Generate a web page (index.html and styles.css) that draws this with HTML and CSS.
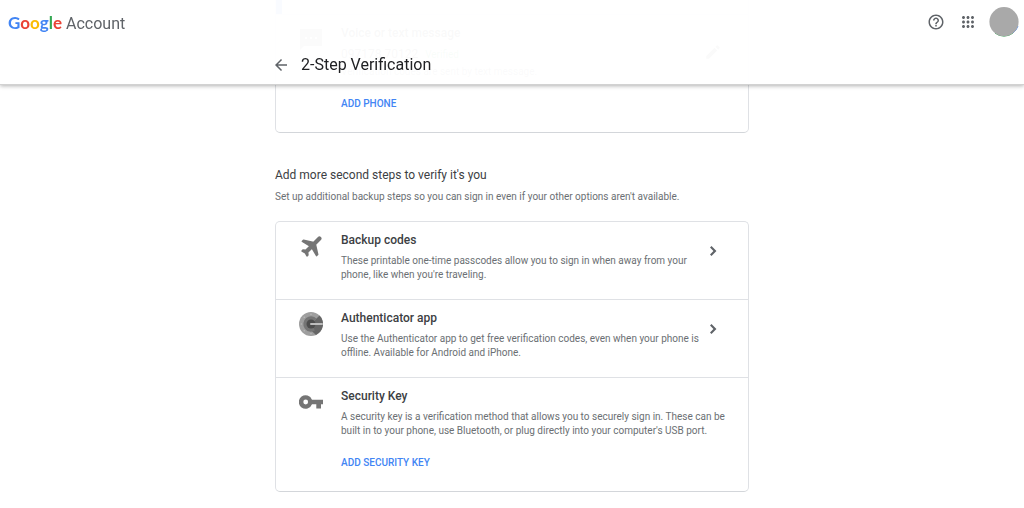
FILE: index.html
```html
<!DOCTYPE html>
<html lang="en">
<head>
  <meta charset="UTF-8">
  <title>2-Step Verification</title>
  <meta name="viewport" content="width=device-width, initial-scale=1.0">
  <link rel="stylesheet" href="styles.css">
</head>
<body>

<header class="header">
  <div class="topbar">
    <a class="brand" href="#"><span class="logo"><span class="blue">G</span><span class="red">o</span><span class="yellow">o</span><span class="blue">g</span><span class="green">l</span><span class="red">e</span></span> Account</a>
    <div class="tools">
      <button class="icon-btn" aria-label="Help">
        <svg width="18" height="18" viewBox="0 0 24 24"><path d="M11 18h2v-2h-2v2zm1-16C6.48 2 2 6.48 2 12s4.48 10 10 10 10-4.48 10-10S17.52 2 12 2zm0 18c-4.41 0-8-3.59-8-8s3.59-8 8-8 8 3.59 8 8-3.59 8-8 8zm0-14c-2.21 0-4 1.79-4 4h2c0-1.1.9-2 2-2s2 .9 2 2c0 2-3 1.75-3 5h2c0-2.25 3-2.5 3-5 0-2.21-1.79-4-4-4z"/></svg>
      </button>
      <button class="icon-btn" aria-label="Google apps">
        <svg width="18" height="18" viewBox="0 0 24 24"><path d="M6 8c1.1 0 2-.9 2-2s-.9-2-2-2-2 .9-2 2 .9 2 2 2zm6 12c1.1 0 2-.9 2-2s-.9-2-2-2-2 .9-2 2 .9 2 2 2zm-6 0c1.1 0 2-.9 2-2s-.9-2-2-2-2 .9-2 2 .9 2 2 2zm0-6c1.1 0 2-.9 2-2s-.9-2-2-2-2 .9-2 2 .9 2 2 2zm6 0c1.1 0 2-.9 2-2s-.9-2-2-2-2 .9-2 2 .9 2 2 2zm4-8c0 1.1.9 2 2 2s2-.9 2-2-.9-2-2-2-2 .9-2 2zm-4 2c1.1 0 2-.9 2-2s-.9-2-2-2-2 .9-2 2 .9 2 2 2zm6 6c1.1 0 2-.9 2-2s-.9-2-2-2-2 .9-2 2 .9 2 2 2zm0 6c1.1 0 2-.9 2-2s-.9-2-2-2-2 .9-2 2 .9 2 2 2z"/></svg>
      </button>
      <button class="avatar" aria-label="Profile">
        <svg width="30" height="30" viewBox="0 0 30 30">
          <path d="M6 26A14.500 14.500 0 0 0 24 26" fill="none" stroke="#34a853" stroke-width="1"/>
          <path d="M24 26A14.500 14.500 0 0 0 29 19" fill="none" stroke="#4285f4" stroke-width="1"/>
          <circle cx="15" cy="14.700" r="14.600" fill="#a9a9a9"/>
        </svg>
      </button>
    </div>
  </div>
  <div class="titlebar">
    <a class="back" href="#" aria-label="Back">
      <svg width="18" height="18" viewBox="0 0 24 24"><path d="M20 11H7.830l5.590-5.590L12 4l-8 8 8 8 1.410-1.410L7.830 13H20v-2z"/></svg>
    </a>
    <h1>2-Step Verification</h1>
  </div>
</header>

<main>
  <section class="card phone-card">
    <div class="selected"></div>
    <div class="row">
      <svg class="row-icon" width="24" height="24" viewBox="0 0 24 24"><path d="M1 2h22v17H5l-4 4V2zm5 8v2h2v-2H6zm5 0v2h2v-2h-2zm5 0v2h2v-2h-2z"/></svg>
      <div class="row-text">
        <h3>Voice or text message</h3>
        <p class="number">097178 70122 <span class="verified">Verified</span></p>
        <p>Verification codes are sent by text message.</p>
        <button class="action">ADD PHONE</button>
      </div>
      <button class="row-btn edit" aria-label="Edit phone">
        <svg width="18" height="18" viewBox="0 0 24 24"><path d="M3 17.250V21h3.750L17.810 9.940l-3.750-3.750L3 17.250zM20.710 7.040a1 1 0 0 0 0-1.410l-2.340-2.340a1 1 0 0 0-1.410 0l-1.830 1.830 3.750 3.750 1.830-1.830z"/></svg>
      </button>
    </div>
  </section>

  <h2>Add more second steps to verify it's you</h2>
  <p class="intro">Set up additional backup steps so you can sign in even if your other options aren't available.</p>

  <section class="card">
    <div class="row">
      <svg class="row-icon" width="24" height="24" viewBox="0 0 24 24"><path transform="translate(1 0) rotate(45 12 12)" stroke="#757575" stroke-width="1.600" stroke-linejoin="round" d="M22 15.500v-1.500L13.300 8.500V1.500a1.300 1.300 0 0 0-2.600 0v7L2 14v1.500l8.700-2.200v6.200L8.500 21.300V22.500l3.500-1 3.500 1v-1.200l-2.200-1.800v-6.200l8.700 2.200z"/></svg>
      <div class="row-text">
        <h3>Backup codes</h3>
        <p>These printable one-time passcodes allow you to sign in when away from your phone, like when you're traveling.</p>
      </div>
      <button class="row-btn" aria-label="Backup codes">
        <svg width="18" height="18" viewBox="0 0 24 24"><path d="M8 16.600 12.600 12 8 7.400 10 5.400l6.600 6.600-6.600 6.600-2-2z"/></svg>
      </button>
    </div>
    <div class="row">
      <svg class="row-icon" width="24" height="24" viewBox="0 0 24 24">
        <circle cx="12" cy="12" r="12" fill="#9e9e9e"/>
        <path d="M17.500 6.500 20.500 3.500A12 12 0 0 1 17 22.900L9 15.500z" fill="#666"/>
        <path d="M17.600 6.700A7.700 7.700 0 1 0 16 18.600L12 12z" fill="#757575"/>
        <circle cx="12" cy="12" r="4.500" fill="#4d4d4d"/>
        <path d="M12 12H23" stroke="#bdbdbd" stroke-width="2" stroke-linecap="round"/>
        <g fill="#bdbdbd"><circle cx="12" cy="2.300" r=".7"/><circle cx="5.200" cy="5.200" r=".7"/><circle cx="2.300" cy="12" r=".7"/><circle cx="5.200" cy="18.800" r=".7"/><circle cx="12" cy="21.700" r=".7"/></g>
      </svg>
      <div class="row-text">
        <h3>Authenticator app</h3>
        <p>Use the Authenticator app to get free verification codes, even when your phone is offline. Available for Android and iPhone.</p>
      </div>
      <button class="row-btn" aria-label="Authenticator app">
        <svg width="18" height="18" viewBox="0 0 24 24"><path d="M8 16.600 12.600 12 8 7.400 10 5.400l6.600 6.600-6.600 6.600-2-2z"/></svg>
      </button>
    </div>
    <div class="row wide">
      <svg class="row-icon" width="24" height="24" viewBox="0 0 24 24"><path fill-rule="evenodd" d="M13 9.700A6.800 6.800 0 1 0 13 14.300H17.300V18.500H22V14.300H24V9.700H13zM6.700 14.400a2.400 2.400 0 1 1 0-4.800 2.400 2.400 0 0 1 0 4.800z"/></svg>
      <div class="row-text">
        <h3>Security Key</h3>
        <p>A security key is a verification method that allows you to securely sign in. These can be built in to your phone, use Bluetooth, or plug directly into your computer's USB port.</p>
        <button class="action">ADD SECURITY KEY</button>
      </div>
    </div>
  </section>
</main>

</body>
</html>
```
FILE: styles.css
```css
:root {
  --text-color: #3c4043;
  --muted-color: #6b6f73;
  --border-color: #dfe1e5;
  --link-color: #4285f4;
}

* {
  box-sizing: border-box;
}

body {
  margin: 0;
  background-color: #fff;
  color: var(--text-color);
  font-family: Roboto, Arial, sans-serif;
}

h1, h2, h3, p {
  margin: 0;
}

button {
  padding: 0;
  border: none;
  background: none;
  font-family: inherit;
  cursor: pointer;
}

svg {
  display: block;
  fill: #5f6368;
}

/* header stays on top, the page scrolls under it */
.header {
  position: fixed;
  top: 0;
  left: 0;
  right: 0;
  z-index: 1;
  padding-bottom: 10px;
  background-color: rgba(255, 255, 255, 0.97);
  border-bottom: 1px solid #d2d2d2;
  box-shadow: 0 1px 4px rgba(0, 0, 0, 0.3);
}

.topbar {
  display: flex;
  align-items: center;
  justify-content: space-between;
  height: 44px;
  padding: 0 5px 0 8px;
}

.brand {
  color: #5f6368;
  font-size: 16px;
  text-decoration: none;
}

.logo {
  font-family: Lato, sans-serif;
  font-size: 17px;
  font-weight: 700;
}

.blue { color: #4285f4; }
.red { color: #ea4335; }
.yellow { color: #fbbc05; }
.green { color: #34a853; }

.tools {
  display: flex;
  align-items: center;
  gap: 10px;
}

.icon-btn {
  padding: 0 2px;
}

.titlebar {
  display: flex;
  align-items: center;
  gap: 11px;
  max-width: 480px;
  height: 30px;
  margin: 0 auto;
  padding-top: 12px;
}

h1 {
  color: #202124;
  font-size: 16px;
  font-weight: 400;
  line-height: 20px;
}

main {
  max-width: 474px;
  margin: 0 auto;
}

.card {
  border: 1px solid var(--border-color);
  border-bottom-color: #d3d6da;
  border-radius: 5px;
}

.phone-card {
  border-top: none;
  border-radius: 0 0 5px 5px;
}

.selected {
  height: 14px;
  border-left: 6px solid var(--link-color);
}

.row {
  display: flex;
  padding: 11px 26px 17px 23px;
}

.row.wide {
  padding-right: 18px;
}

.row:last-child {
  padding-bottom: 21px;
}

.row + .row,
.selected + .row {
  border-top: 1px solid var(--border-color);
}

.row-icon {
  flex: none;
  margin: 1px 18px 0 0;
  fill: #757575;
}

.row-text {
  flex: 1;
}

h3 {
  margin-bottom: 7px;
  font-size: 12px;
  font-weight: 500;
  line-height: 14px;
}

.row-text p {
  color: var(--muted-color);
  font-size: 10px;
  line-height: 14px;
}

.row-text .number {
  margin-bottom: 3px;
  color: var(--text-color);
  font-size: 12px;
}

.verified {
  margin-left: 4px;
  color: #34a853;
  font-size: 10px;
}

.row-btn {
  align-self: flex-start;
  margin-top: 9px;
}

.row-btn.edit {
  margin-top: 17px;
}

.action {
  display: block;
  margin-top: 18px;
  color: var(--link-color);
  font-size: 10px;
  font-weight: 500;
  line-height: 14px;
}

h2 {
  margin-top: 34px;
  font-size: 12px;
  font-weight: 400;
  line-height: 16px;
}

.intro {
  margin: 7px 0 17px;
  color: var(--muted-color);
  font-size: 10px;
  line-height: 14px;
}
```
